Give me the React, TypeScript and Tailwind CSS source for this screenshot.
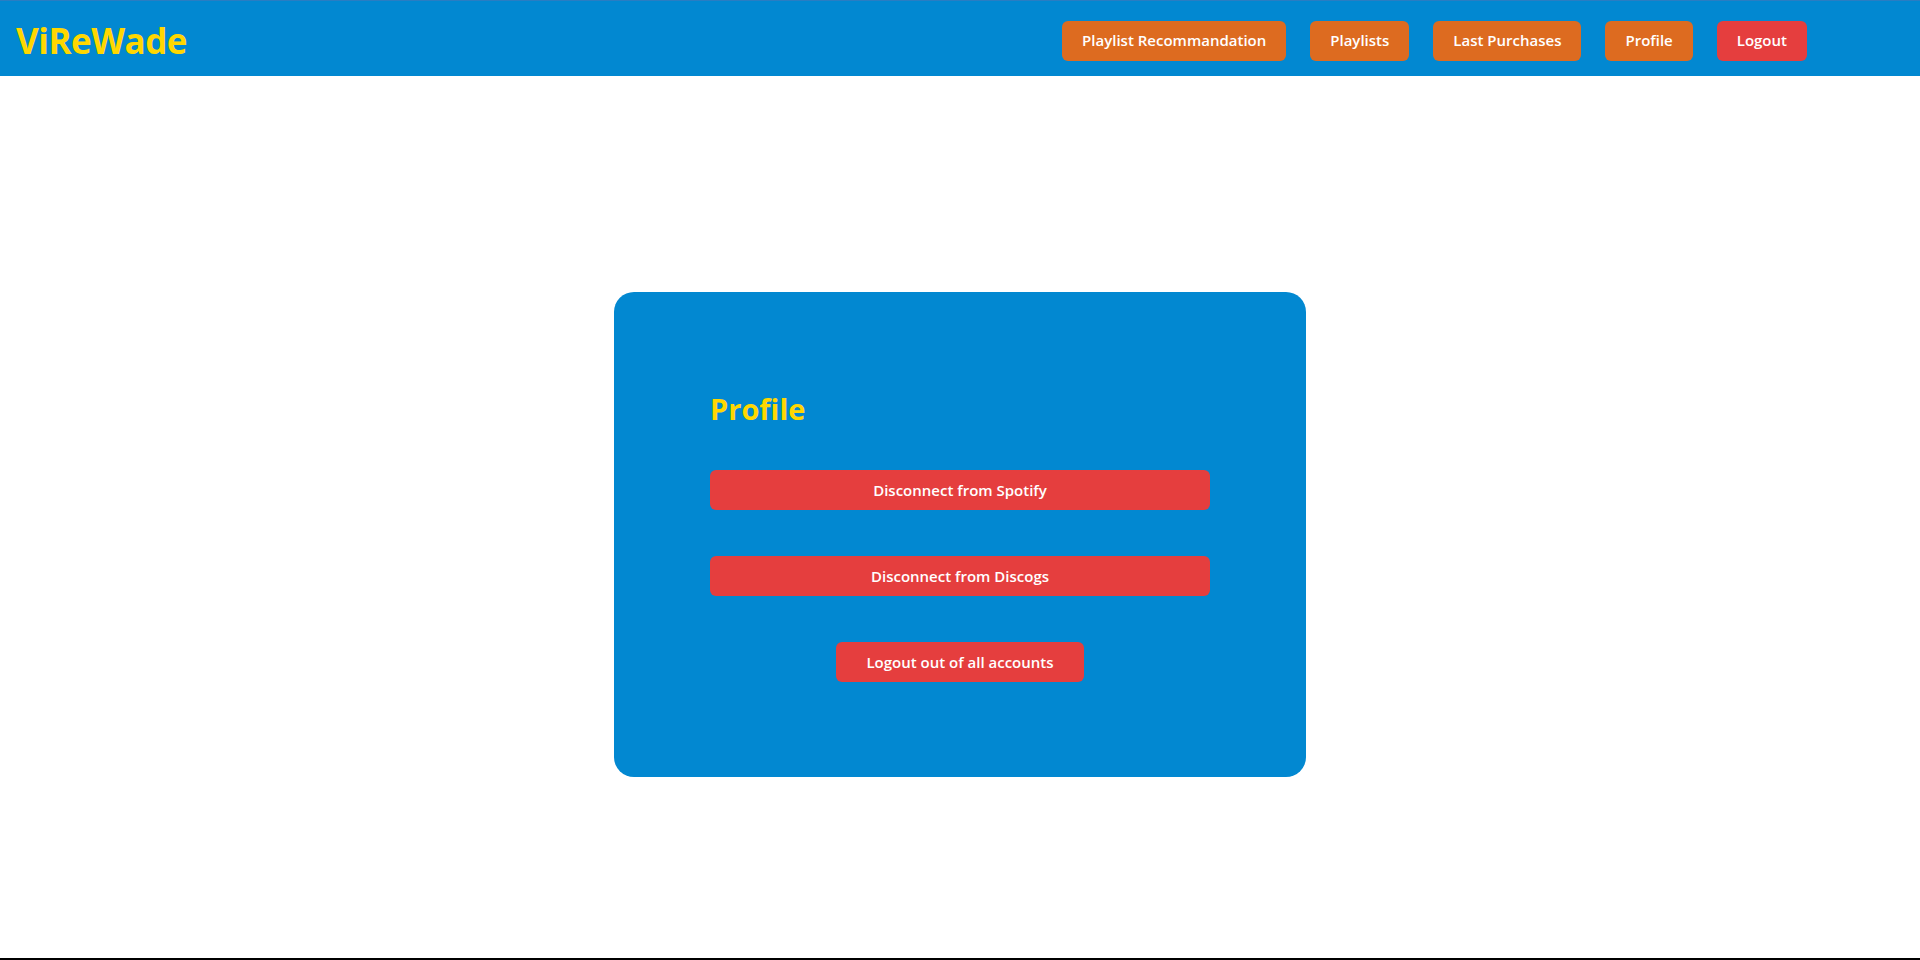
const navLinks = [
  { label: "Playlist Recommandation", tone: "orange" },
  { label: "Playlists", tone: "orange" },
  { label: "Last Purchases", tone: "orange" },
  { label: "Profile", tone: "orange" },
  { label: "Logout", tone: "red" },
];

function NavBar() {
  return (
    <nav className="flex h-[76px] items-center border-t border-[#2a7dc2] bg-[#0288d1] pt-1 pl-4 pr-[113px]">
      <span className="text-[35px] font-bold leading-none tracking-[-0.5px] text-[#ffd700]">ViReWade</span>
      <div className="ml-auto flex items-center gap-6">
        {navLinks.map((link) => (
          <button
            key={link.label}
            className={`h-10 rounded-md px-5 text-[15px] font-semibold text-white ${
              link.tone === "red" ? "bg-[#e53e3e]" : "bg-[#dd6b20]"
            }`}
          >
            {link.label}
          </button>
        ))}
      </div>
    </nav>
  );
}

export default function App() {
  return (
    <div
      className="flex h-screen flex-col bg-white"
      style={{ fontFamily: '"Open Sans", "Noto Sans", sans-serif' }}
    >
      <NavBar />
      <main className="flex flex-1 justify-center pt-[216px]">
        <div className="flex h-[485px] w-[692px] flex-col gap-[46px] rounded-[20px] bg-[#0288d1] px-24 pt-24">
          <h1 className="h-9 pt-[3px] text-[29px] font-bold leading-[36px] text-[#ffd700]">Profile</h1>
          <button className="h-10 w-full rounded-md bg-[#e53e3e] text-[15px] font-semibold text-white">
            Disconnect from Spotify
          </button>
          <button className="h-10 w-full rounded-md bg-[#e53e3e] text-[15px] font-semibold text-white">
            Disconnect from Discogs
          </button>
          <button className="mx-auto h-10 w-[248px] rounded-md bg-[#e53e3e] text-[15px] font-semibold text-white">
            Logout out of all accounts
          </button>
        </div>
      </main>
      <div className="h-[2px] bg-black" />
    </div>
  );
}
